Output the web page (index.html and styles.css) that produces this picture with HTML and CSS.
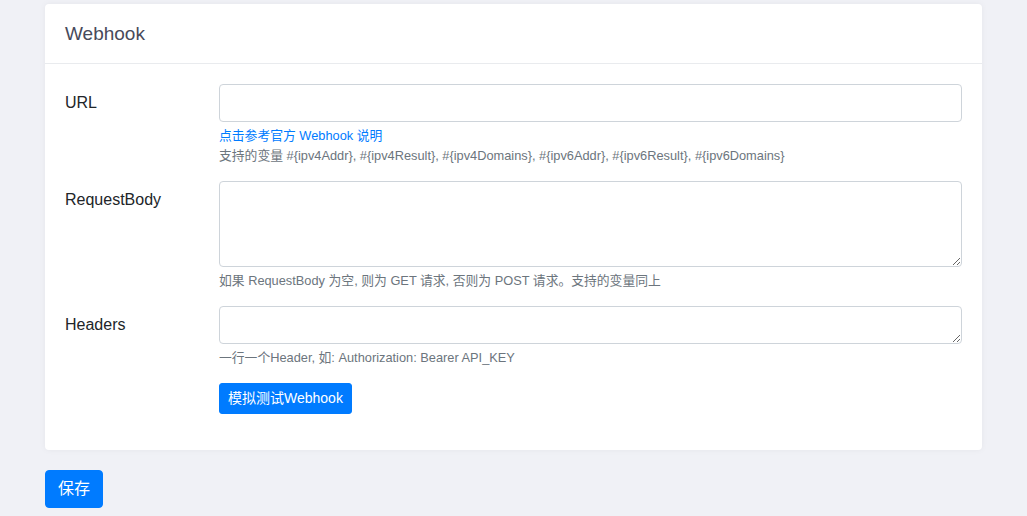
FILE: index.html
```html
<!DOCTYPE html>
<html lang="zh">
<head>
<meta charset="utf-8">
<title>Webhook</title>
<link rel="stylesheet" href="styles.css">
</head>
<body>
<div class="page">
  <div class="card">
    <div class="card-header">Webhook</div>
    <div class="card-body">
      <div class="form-row">
        <label class="label">URL</label>
        <div class="field">
          <input class="input" type="text">
          <small class="help help-multi"><a class="link" href="#">点击参考官方 Webhook 说明</a><br>支持的变量 #{ipv4Addr}, #{ipv4Result}, #{ipv4Domains}, #{ipv6Addr}, #{ipv6Result}, #{ipv6Domains}</small>
        </div>
      </div>
      <div class="form-row">
        <label class="label">RequestBody</label>
        <div class="field">
          <textarea class="input textarea" rows="3"></textarea>
          <small class="help">如果 RequestBody 为空, 则为 GET 请求, 否则为 POST 请求。支持的变量同上</small>
        </div>
      </div>
      <div class="form-row">
        <label class="label">Headers</label>
        <div class="field">
          <textarea class="input textarea" rows="1"></textarea>
          <small class="help">一行一个Header, 如: Authorization: Bearer API_KEY</small>
        </div>
      </div>
      <div class="form-row">
        <div class="label"></div>
        <div class="field">
          <button class="btn btn-sm" type="button">模拟测试Webhook</button>
        </div>
      </div>
    </div>
  </div>
  <button class="btn btn-save" type="button">保存</button>
</div>
</body>
</html>
```

FILE: styles.css
```css
* { box-sizing: border-box; }
html, body { margin: 0; padding: 0; }
body {
  background: #f0f1f6;
  font-family: "Liberation Sans", Arial, "Noto Sans CJK SC", sans-serif;
  color: #212529;
  font-size: 16px;
  line-height: 1.5;
}
.page {
  padding: 4px 45px 0 45px;
}
.card {
  background: #fff;
  border-radius: 4px;
  box-shadow: 0 0 6px rgba(0, 0, 0, 0.05);
  margin-bottom: 20px;
}
.card-header {
  padding: 18px 20px;
  font-size: 19px;
  line-height: 23px;
  color: #484a5a;
  border-bottom: 1px solid #e9ebee;
}
.card-body {
  padding: 20px;
}
.form-row {
  display: grid;
  grid-template-columns: 154px 1fr;
  margin-bottom: 16px;
}
.label {
  padding-top: 7px;
  padding-bottom: 7px;
  font-size: 16px;
  line-height: 24px;
  color: #212529;
}
.field { min-width: 0; }
.input {
  display: block;
  width: 100%;
  height: 38px;
  padding: 6px 12px;
  font: inherit;
  font-size: 16px;
  line-height: 24px;
  color: #495057;
  background: #fff;
  border: 1px solid #ced4da;
  border-radius: 4px;
  margin: 0;
}
.textarea {
  height: auto;
  resize: vertical;
}
.help {
  display: block;
  margin-top: 4px;
  font-size: 12.8px;
  line-height: 19.2px;
  color: #6c757d;
}
.help-multi {
  line-height: 19.5px;
}
.link {
  color: #007bff;
  text-decoration: none;
}
.btn {
  display: inline-block;
  font-family: inherit;
  color: #fff;
  background: #007bff;
  border: 1px solid #007bff;
  cursor: pointer;
}
.btn-sm {
  padding: 4px 8px;
  font-size: 14px;
  line-height: 21px;
  border-radius: 3px;
}
.btn-save {
  padding: 6px 12px;
  font-size: 16px;
  line-height: 24px;
  border-radius: 4px;
}
```
